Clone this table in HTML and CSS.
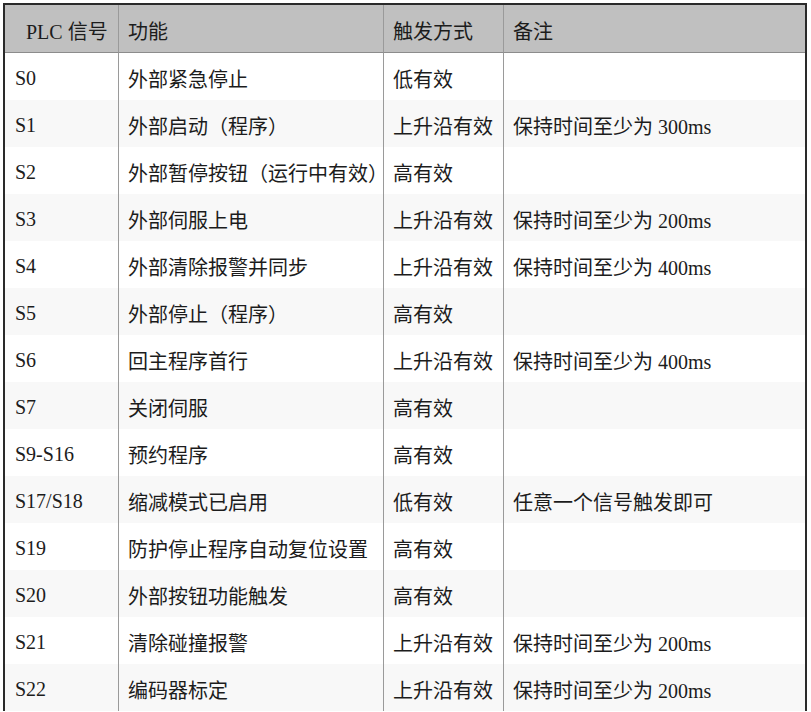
FILE: index.html
```html
<!DOCTYPE html>
<html lang="zh">
<head>
<meta charset="utf-8">
<link rel="stylesheet" href="styles.css">
</head>
<body>
<table class="sig">
  <colgroup>
    <col class="c1"><col class="c2"><col class="c3"><col class="c4">
  </colgroup>
  <thead>
    <tr><th class="first">PLC 信号</th><th>功能</th><th>触发方式</th><th>备注</th></tr>
  </thead>
  <tbody>
    <tr><td>S0</td><td>外部紧急停止</td><td>低有效</td><td></td></tr>
    <tr><td>S1</td><td>外部启动（程序）</td><td>上升沿有效</td><td>保持时间至少为 300ms</td></tr>
    <tr><td>S2</td><td>外部暂停按钮（运行中有效）</td><td>高有效</td><td></td></tr>
    <tr><td>S3</td><td>外部伺服上电</td><td>上升沿有效</td><td>保持时间至少为 200ms</td></tr>
    <tr><td>S4</td><td>外部清除报警并同步</td><td>上升沿有效</td><td>保持时间至少为 400ms</td></tr>
    <tr><td>S5</td><td>外部停止（程序）</td><td>高有效</td><td></td></tr>
    <tr><td>S6</td><td>回主程序首行</td><td>上升沿有效</td><td>保持时间至少为 400ms</td></tr>
    <tr><td>S7</td><td>关闭伺服</td><td>高有效</td><td></td></tr>
    <tr><td>S9-S16</td><td>预约程序</td><td>高有效</td><td></td></tr>
    <tr><td>S17/S18</td><td>缩减模式已启用</td><td>低有效</td><td>任意一个信号触发即可</td></tr>
    <tr><td>S19</td><td>防护停止程序自动复位设置</td><td>高有效</td><td></td></tr>
    <tr><td>S20</td><td>外部按钮功能触发</td><td>高有效</td><td></td></tr>
    <tr><td>S21</td><td>清除碰撞报警</td><td>上升沿有效</td><td>保持时间至少为 200ms</td></tr>
    <tr><td>S22</td><td>编码器标定</td><td>上升沿有效</td><td>保持时间至少为 200ms</td></tr>
  </tbody>
</table>
</body>
</html>
```
FILE: styles.css
```css
html, body {
  margin: 0;
  padding: 0;
  background: #ffffff;
}
body {
  padding: 3px 0 0 3px;
}
.sig {
  table-layout: fixed;
  border-collapse: separate;
  border-spacing: 0;
  width: 804px;
  border: 2px solid #2a2a2a;
  border-bottom: none;
  font-family: "Liberation Serif", "Noto Sans CJK SC", serif;
  font-size: 20px;
  color: #1c1c1c;
}
.c1 { width: 113px; }
.c2 { width: 265px; }
.c3 { width: 120px; }
.c4 { width: 302px; }
.sig th, .sig td {
  box-sizing: border-box;
  padding: 0 0 0 10px;
  text-align: left;
  font-weight: normal;
  vertical-align: middle;
  white-space: nowrap;
}
.sig th + th, .sig td + td {
  border-left: 1px solid #9a9a9a;
  padding-left: 9px;
}
.sig thead th {
  height: 48px;
  background: #c0c0c0;
  border-bottom: 1px solid #8c8c8c;
  padding-top: 3px;
}
.sig thead th.first {
  padding-left: 21px;
}
.sig tbody td {
  height: 47px;
  padding-top: 4px;
}
.sig tbody tr:nth-child(even) td {
  background: #f8f8f8;
}
```
